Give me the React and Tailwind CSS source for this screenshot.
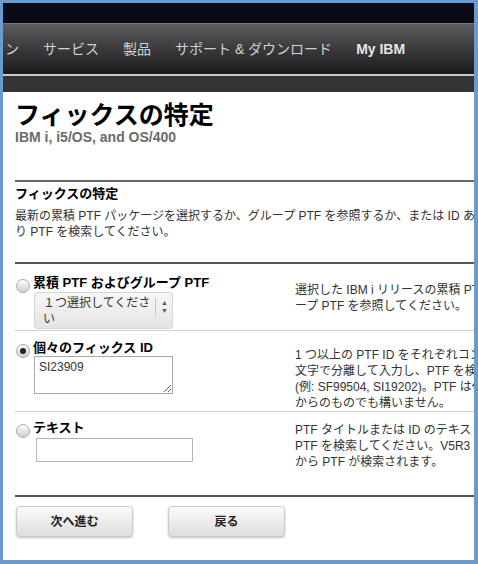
import React from 'react';

const font = { fontFamily: '"Liberation Sans", "Noto Sans CJK JP", sans-serif' };

function Radio({ checked }) {
    return (
        <span className="mt-[3px] w-[14px] h-[14px] shrink-0 rounded-full border border-[#a9a9a9] bg-gradient-to-b from-[#fdfdfd] to-[#cfcfcf] flex items-center justify-center">
            {checked && <span className="w-[6px] h-[6px] rounded-full bg-[#222]" />}
        </span>
    );
}

function Row({ radio, label, control, help, pt, pb, helpPt, border }) {
    return (
        <div className={`flex ${border}`}>
            <div className={`w-[280px] shrink-0 ${pt} ${pb}`}>
                <div className="flex items-start gap-[3px] pl-[1px] h-[14px]">
                    <Radio checked={radio} />
                    <span className="text-[13px] leading-[14px] font-bold text-black">{label}</span>
                </div>
                <div className="pl-[19px]">{control}</div>
            </div>
            <div className={`text-[12px] leading-[16px] text-[#333] whitespace-nowrap ${helpPt}`}>{help}</div>
        </div>
    );
}

export default function App() {
    return (
        <div style={font} className="w-[478px] h-[564px] bg-white border-[#6a9bcf] border-l-[3px] border-t-[3px] border-r-[4px] border-b-[4px] overflow-hidden">
            {/* masthead */}
            <div className="h-[20px] bg-[#0a0b17]" />
            <div className="h-[51px] bg-gradient-to-b from-[#5d5d5f] via-[#3a3a3c] to-[#1b1b1c] border-t border-[#77777a] flex items-center gap-[24px] text-[14px] text-[#d0d0d0] whitespace-nowrap pl-[2px]">
                <span>ン</span>
                <span>サービス</span>
                <span>製品</span>
                <span>サポート &amp; ダウンロード</span>
                <span className="font-bold text-[#e6e6e6]">My IBM</span>
            </div>
            <div className="h-[2px] bg-[#c9c9c9]" />
            <div className="h-[16px] bg-[#343434]" />

            <div className="pl-[12px] w-[640px]">
                <h1 className="mt-[8px] text-[25px] leading-[30px] font-bold text-black">フィックスの特定</h1>
                <div className="text-[14px] leading-[14px] font-bold text-[#6b6b6b]">IBM i, i5/OS, and OS/400</div>

                <div className="mt-[36px] border-t-2 border-[#666]" />
                <h2 className="mt-[4px] text-[13px] leading-[16px] font-bold text-black">フィックスの特定</h2>
                <p className="mt-[6px] text-[12px] leading-[16px] text-[#333] whitespace-nowrap">
                    最新の累積 PTF パッケージを選択するか、グループ PTF を参照するか、または ID あるいはテキストによ<br />
                    り PTF を検索してください。
                </p>

                <div className="mt-[22px] border-t-2 border-[#555]" />
                <Row
                    border="border-b border-[#cfcfcf]"
                    pt="pt-[12px]"
                    pb="pb-[1px]"
                    helpPt="pt-[18px]"
                    label="累積 PTF およびグループ PTF"
                    control={
                        <div className="mt-[2px] w-[139px] h-[37px] rounded-[3px] border border-[#d6d6d6] bg-gradient-to-b from-[#f7f7f7] to-[#e4e4e4] flex">
                            <div className="w-[120px] pl-[8px] pt-[2px] text-[12px] leading-[16px] text-[#333]">１つ選択してくださ い</div>
                            <div className="mt-[5px] h-[18px] border-l border-[#c4c4c4] pl-[5px] flex flex-col items-center justify-center text-[7px] leading-[8px] text-[#555]">
                                <span>▲</span>
                                <span>▼</span>
                            </div>
                        </div>
                    }
                    help={<>選択した IBM i リリースの累積 PTF またはグル<br />ープ PTF を参照してください。</>}
                />
                <Row
                    border="border-b border-[#cfcfcf]"
                    pt="pt-[10px]"
                    pb="pb-[17px]"
                    helpPt="pt-[16px]"
                    radio
                    label="個々のフィックス ID"
                    control={
                        <textarea
                            readOnly
                            defaultValue="SI23909"
                            className="block mt-[1px] w-[139px] h-[38px] border border-[#a8a8a8] bg-white px-[4px] py-[3px] text-[12px] leading-[14px] text-[#333] outline-none"
                        />
                    }
                    help={<>1 つ以上の PTF ID をそれぞれコンマまたはスペース<br />文字で分離して入力し、PTF を検索してください<br />(例: SF99504, SI19202)。PTF は任意のリリース<br />からのものでも構いません。</>}
                />
                <Row
                    border="border-b-2 border-[#555]"
                    pt="pt-[9px]"
                    pb="pb-[33px]"
                    helpPt="pt-[10px]"
                    label="テキスト"
                    control={
                        <input
                            readOnly
                            className="block mt-[3px] ml-[2px] w-[157px] h-[24px] border border-[#b5b5b5] bg-white outline-none"
                        />
                    }
                    help={<>PTF タイトルまたは ID のテキストを入力して<br />PTF を検索してください。V5R3 以降のリリース<br />から PTF が検索されます。</>}
                />

                <div className="mt-[9px] flex gap-[35px] pl-[1px]">
                    <button className="w-[117px] h-[31px] rounded-[4px] border border-[#cacaca] bg-gradient-to-b from-[#fbfbfb] to-[#dedede] shadow-[0_1px_2px_rgba(0,0,0,0.25)] text-[12px] font-bold text-[#222]">次へ進む</button>
                    <button className="w-[117px] h-[31px] rounded-[4px] border border-[#cacaca] bg-gradient-to-b from-[#fbfbfb] to-[#dedede] shadow-[0_1px_2px_rgba(0,0,0,0.25)] text-[12px] font-bold text-[#222]">戻る</button>
                </div>
            </div>
        </div>
    );
}
